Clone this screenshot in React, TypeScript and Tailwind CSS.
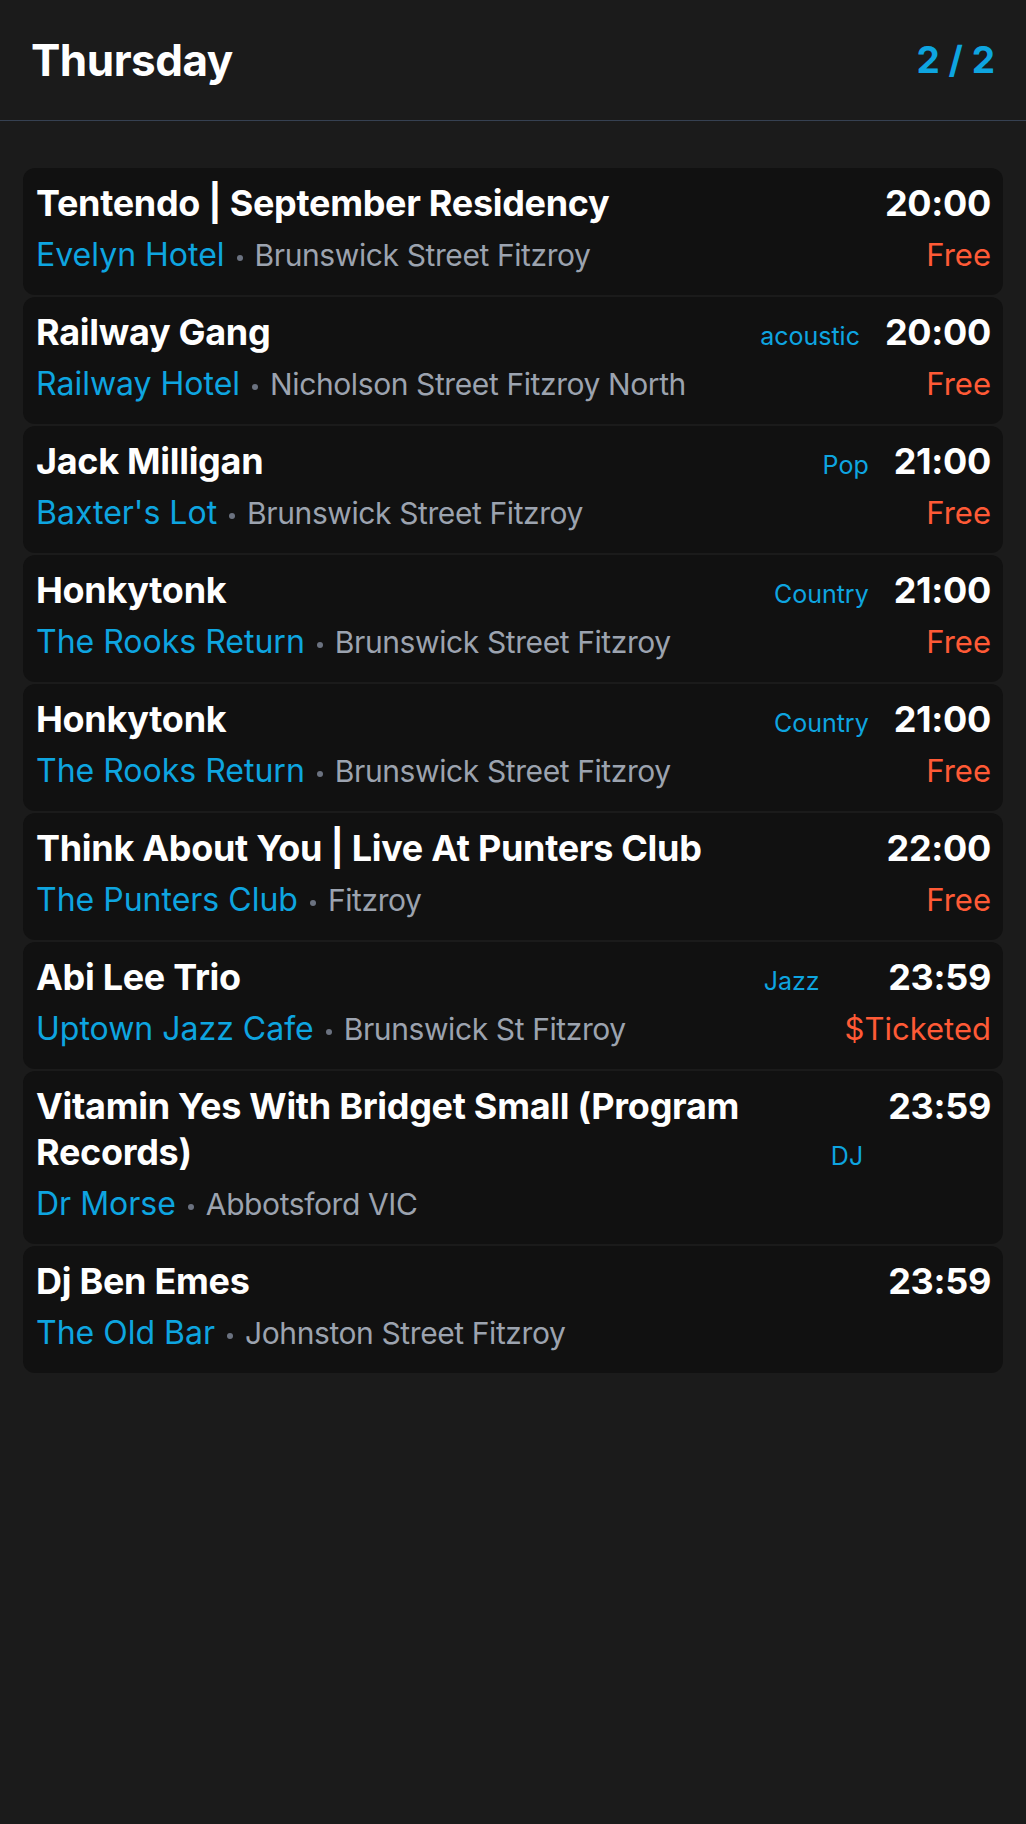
import React from "react";

type Gig = {
  title: string;
  venue: string;
  location: string;
  time: string;
  price?: string;
  tag?: string;
};

const gigs: Gig[] = [
  { title: "Tentendo | September Residency", venue: "Evelyn Hotel", location: "Brunswick Street Fitzroy", time: "20:00", price: "Free" },
  { title: "Railway Gang", venue: "Railway Hotel", location: "Nicholson Street Fitzroy North", time: "20:00", price: "Free", tag: "acoustic" },
  { title: "Jack Milligan", venue: "Baxter's Lot", location: "Brunswick Street Fitzroy", time: "21:00", price: "Free", tag: "Pop" },
  { title: "Honkytonk", venue: "The Rooks Return", location: "Brunswick Street Fitzroy", time: "21:00", price: "Free", tag: "Country" },
  { title: "Honkytonk", venue: "The Rooks Return", location: "Brunswick Street Fitzroy", time: "21:00", price: "Free", tag: "Country" },
  { title: "Think About You | Live At Punters Club", venue: "The Punters Club", location: "Fitzroy", time: "22:00", price: "Free" },
  { title: "Abi Lee Trio", venue: "Uptown Jazz Cafe", location: "Brunswick St Fitzroy", time: "23:59", price: "$Ticketed", tag: "Jazz" },
  { title: "Vitamin Yes With Bridget Small (Program Records)", venue: "Dr Morse", location: "Abbotsford VIC", time: "23:59", tag: "DJ" },
  { title: "Dj Ben Emes", venue: "The Old Bar", location: "Johnston Street Fitzroy", time: "23:59" },
];

function Card({ g }: { g: Gig }) {
  return (
    <div className="flex rounded-[12px] bg-[#111111] pt-[12px] pb-[18px] pl-[13px] pr-[12px]">
      <div className="min-w-0 flex-1">
        <div className="flex items-end gap-4">
          <div className="min-w-0 flex-1 text-[36px] font-bold leading-[46px] tracking-[-0.3px] text-white">
            {g.title}
          </div>
          {g.tag && (
            <span className="shrink-0 text-[25px] leading-[38px] text-[#0ea5e0]">{g.tag}</span>
          )}
        </div>
        <div className="mt-[7px] h-[44px] whitespace-nowrap text-[31px] leading-[44px]">
          <span className="text-[32px] text-[#0ea5e0]">{g.venue}</span>
          <span className="mx-[12px] inline-block h-[6px] w-[6px] rounded-full bg-[#6b7280] align-middle" />
          <span className="text-[30px] tracking-[-0.4px] text-[#9ca3af]">{g.location}</span>
        </div>
      </div>
      <div className="ml-[25px] flex shrink-0 flex-col items-end">
        <div className="text-[36px] font-bold leading-[46px] tracking-[-0.3px] text-white">{g.time}</div>
        {g.price && (
          <div className="mt-[7px] text-[31px] leading-[44px] text-[#ff5a36]">{g.price}</div>
        )}
      </div>
    </div>
  );
}

export default function App() {
  return (
    <div
      className="min-h-screen bg-[#1b1b1b]"
      style={{ fontFamily: "Inter, 'Noto Sans', 'Liberation Sans', sans-serif" }}
    >
      <header className="flex h-[121px] items-center justify-between border-b border-[#364152] px-[31px]">
        <h1 className="text-[44px] font-bold tracking-[-0.5px] text-white">Thursday</h1>
        <div className="text-[37px] font-bold text-[#0ea5e0]">2 / 2</div>
      </header>
      <main className="flex flex-col gap-[2px] px-[23px] pt-[47px] pb-[40px]">
        {gigs.map((g, i) => (
          <Card key={i} g={g} />
        ))}
      </main>
    </div>
  );
}
